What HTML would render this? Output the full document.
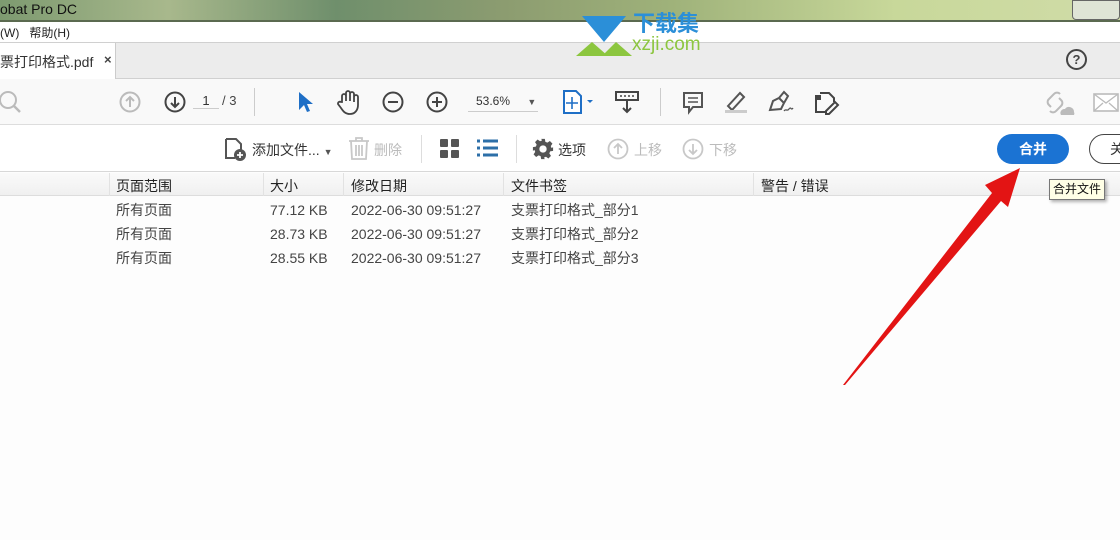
<!DOCTYPE html>
<html><head><meta charset="utf-8"><style>
*{margin:0;padding:0;box-sizing:border-box}
body{width:1120px;height:540px;overflow:hidden;background:#fdfdfd;font-family:"Liberation Sans","Noto Sans CJK SC",sans-serif;color:#333;position:relative;font-size:14px}
.a{position:absolute;white-space:nowrap}
.ic{position:absolute}
</style></head><body>
<div class="a" style="left:0;top:0;width:1120px;height:21px;background:linear-gradient(90deg,#7d9a70 0%,#a8b88c 15%,#6f8f6c 30%,#8c9c70 45%,#9fb27a 60%,#c8d89a 80%,#d0dca8 100%)"></div>
<div class="a" style="left:0;top:1px;font-size:14px;color:#111">obat Pro DC</div>
<div class="a" style="left:1072px;top:0;width:48px;height:20px;background:#dfe4d6;border:1px solid #666;border-radius:0 0 4px 4px"></div>
<div class="a" style="left:0;top:20px;width:1120px;height:2px;background:#5b6a50"></div>
<div class="a" style="left:0;top:22px;width:1120px;height:20px;background:#fff"></div>
<div class="a" style="left:0;top:24px;font-size:12px;color:#222">(W)&nbsp;&nbsp;&nbsp;帮助(H)</div>
<div class="a" style="left:0;top:42px;width:1120px;height:37px;background:#ececec;border-top:1px solid #d0d0d0;border-bottom:1px solid #d0d0d0"></div>
<div class="a" style="left:0;top:43px;width:116px;height:36px;background:#fff;border-right:1px solid #ccc"></div>
<div class="a" style="left:0;top:52px;font-size:14px;color:#333">票打印格式.pdf</div>
<div class="a" style="left:104px;top:52px;font-size:13px;color:#444;font-weight:bold">×</div>
<div class="a" style="left:1066px;top:49px;width:21px;height:21px;border:2px solid #444;border-radius:50%;text-align:center;font-size:13px;line-height:17px;font-weight:bold;color:#444">?</div>
<svg class="ic" style="left:574px;top:14px" width="60" height="44"><polygon points="8,2 52,2 30,28" fill="#2b8fd8"/><polygon points="2,42 18,28 34,42" fill="#8cc63f"/><polygon points="28,42 42,28 58,42" fill="#8cc63f"/></svg>
<div class="a" style="left:633px;top:12px;font-size:22px;font-weight:bold;color:#2b8fd8;line-height:24px">下载集</div>
<div class="a" style="left:632px;top:34px;font-size:19px;color:#8cc63f;line-height:22px">xzji.com</div>
<div class="a" style="left:0;top:79px;width:1120px;height:46px;background:#f9f9f9;border-bottom:1px solid #ddd"></div>
<svg class="ic" style="left:0;top:90px" width="24" height="24"><circle cx="8" cy="10" r="8" fill="none" stroke="#bbb" stroke-width="2"/><line x1="14" y1="16" x2="20" y2="22" stroke="#bbb" stroke-width="2.5"/></svg>
<svg class="ic" style="left:119px;top:91px" width="22" height="22"><circle cx="11" cy="11" r="9.5" fill="none" stroke="#bbb" stroke-width="2"/><path d="M11 16V6M7 10l4-4 4 4" fill="none" stroke="#bbb" stroke-width="2"/></svg>
<svg class="ic" style="left:164px;top:91px" width="22" height="22"><circle cx="11" cy="11" r="9.5" fill="none" stroke="#444" stroke-width="2"/><path d="M11 6v10M7 12l4 4 4-4" fill="none" stroke="#444" stroke-width="2"/></svg>
<div class="a" style="left:193px;top:93px;width:26px;text-align:center;font-size:13px;color:#333;border-bottom:1px solid #ccc">1</div>
<div class="a" style="left:222px;top:93px;font-size:13px;color:#444">/ 3</div>
<div class="a" style="left:254px;top:88px;width:1px;height:28px;background:#ccc"></div>
<svg class="ic" style="left:296px;top:90px" width="20" height="24"><path d="M3 2L3 20 8 15 11 22 14 21 11 14 17 14Z" fill="#1f6fc6"/></svg>
<svg class="ic" style="left:336px;top:88px" width="26" height="28"><path d="M6 14V8a2 2 0 014 0v5V5a2 2 0 014 0v8V6a2 2 0 014 0v8V9a2 2 0 014 0v8c0 5-3 9-8 9s-7-3-9-6l-3-4a2 2 0 013-2z" fill="none" stroke="#444" stroke-width="1.8"/></svg>
<svg class="ic" style="left:382px;top:91px" width="22" height="22"><circle cx="11" cy="11" r="9.5" fill="none" stroke="#444" stroke-width="2"/><line x1="6" y1="11" x2="16" y2="11" stroke="#444" stroke-width="2"/></svg>
<svg class="ic" style="left:426px;top:91px" width="22" height="22"><circle cx="11" cy="11" r="9.5" fill="none" stroke="#444" stroke-width="2"/><path d="M6 11h10M11 6v10" stroke="#444" stroke-width="2"/></svg>
<div class="a" style="left:468px;top:94px;width:70px;font-size:12px;color:#333;border-bottom:1px solid #ccc;padding:0 0 3px 8px">53.6% <span style="margin-left:14px;font-size:9px;color:#555">▼</span></div>
<svg class="ic" style="left:562px;top:90px" width="34" height="24"><path d="M2 1h12l5 5v17H2z" fill="#fff" stroke="#1f6fc6" stroke-width="2"/><path d="M10 7v12M4 13h12" stroke="#1f6fc6" stroke-width="1.6"/><path d="M25 10l3 3 3-3z" fill="#1f6fc6"/></svg>
<svg class="ic" style="left:614px;top:90px" width="26" height="24"><rect x="2" y="2" width="22" height="8" fill="none" stroke="#444" stroke-width="2"/><path d="M6 6h2M10 6h2M14 6h2M18 6h2" stroke="#444" stroke-width="1.5"/><path d="M13 11v11M9 18l4 4 4-4" fill="none" stroke="#444" stroke-width="2"/></svg>
<div class="a" style="left:660px;top:88px;width:1px;height:28px;background:#ccc"></div>
<svg class="ic" style="left:682px;top:91px" width="22" height="24"><path d="M2 2h18v14h-9l-4 5v-5H2z" fill="none" stroke="#555" stroke-width="2"/><path d="M6 7h10M6 11h10" stroke="#555" stroke-width="1.5"/></svg>
<svg class="ic" style="left:722px;top:90px" width="28" height="24"><path d="M6 16L18 3l4 4L10 20z" fill="none" stroke="#555" stroke-width="2"/><rect x="3" y="20" width="22" height="3" fill="#ccc"/></svg>
<svg class="ic" style="left:766px;top:90px" width="28" height="24"><path d="M4 20l3-9 6-3 5 5-3 6z M13 8l5-6 4 4-4 7" fill="none" stroke="#555" stroke-width="2"/><path d="M18 21c2-3 3 1 5-2s2 2 4-1" fill="none" stroke="#555" stroke-width="1.3"/></svg>
<svg class="ic" style="left:812px;top:89px" width="28" height="26"><path d="M8 4h9l5 5v4M4 10v13h10" fill="none" stroke="#444" stroke-width="2"/><rect x="3" y="6" width="6" height="5" fill="#444"/><path d="M14 22l9-9 3 3-9 9h-3z" fill="none" stroke="#444" stroke-width="2"/></svg>
<svg class="ic" style="left:1046px;top:90px" width="30" height="26"><path d="M5 17l-2-2a4 4 0 010-6l5-5a4 4 0 016 0M13 8l2 2a4 4 0 010 6l-5 5a4 4 0 01-6 0" fill="none" stroke="#bbb" stroke-width="2"/><path d="M15 25a4 4 0 014-6 5 5 0 019 3 3 3 0 010 3z" fill="#bbb"/></svg>
<svg class="ic" style="left:1093px;top:93px" width="27" height="20"><rect x="1" y="1" width="24" height="17" fill="#fff" stroke="#bbb" stroke-width="1.6"/><path d="M1 1l12 9 12-9M1 18l9-8M25 18l-9-8" fill="none" stroke="#bbb" stroke-width="1.3"/></svg>
<div class="a" style="left:0;top:125px;width:1120px;height:47px;background:#fff;border-bottom:1px solid #d8d8d8"></div>
<svg class="ic" style="left:224px;top:137px" width="24" height="26"><path d="M2 2h10l5 5v6M2 2v19h9" fill="none" stroke="#555" stroke-width="2"/><circle cx="16" cy="18" r="6" fill="#555"/><path d="M16 15v6M13 18h6" stroke="#fff" stroke-width="1.8"/></svg>
<div class="a" style="left:252px;top:140px;font-size:14px;color:#333">添加文件... <span style="font-size:9px;color:#555">▼</span></div>
<svg class="ic" style="left:348px;top:137px" width="22" height="24"><path d="M1 4h20M8 4V1h6v3M3 4l1 18h14l1-18M8 8v11M11 8v11M14 8v11" fill="none" stroke="#c8c8c8" stroke-width="1.8"/></svg>
<div class="a" style="left:374px;top:140px;font-size:14px;color:#bbb">删除</div>
<div class="a" style="left:421px;top:135px;width:1px;height:28px;background:#ddd"></div>
<svg class="ic" style="left:440px;top:139px" width="20" height="20"><rect x="0" y="0" width="8" height="8" rx="1" fill="#555"/><rect x="11" y="0" width="8" height="8" rx="1" fill="#555"/><rect x="0" y="11" width="8" height="8" rx="1" fill="#555"/><rect x="11" y="11" width="8" height="8" rx="1" fill="#555"/></svg>
<svg class="ic" style="left:477px;top:139px" width="22" height="20"><path d="M0 2h3M6 2h15M0 9h3M6 9h15M0 16h3M6 16h15" stroke="#2d6fa8" stroke-width="3"/></svg>
<div class="a" style="left:516px;top:135px;width:1px;height:28px;background:#ddd"></div>
<svg class="ic" style="left:532px;top:138px" width="22" height="22" viewBox="0 0 24 24"><path fill="#555" d="M10 1h4l.6 3.2 2.2.9 2.7-1.8 2.8 2.8-1.8 2.7.9 2.2L23 10v4l-3.2.6-.9 2.2 1.8 2.7-2.8 2.8-2.7-1.8-2.2.9L14 23h-4l-.6-3.2-2.2-.9-2.7 1.8-2.8-2.8 1.8-2.7-.9-2.2L1 14v-4l3.2-.6.9-2.2-1.8-2.7 2.8-2.8 2.7 1.8 2.2-.9zM12 8a4 4 0 100 8 4 4 0 000-8z"/></svg>
<div class="a" style="left:558px;top:140px;font-size:14px;color:#333">选项</div>
<svg class="ic" style="left:607px;top:138px" width="22" height="22"><circle cx="11" cy="11" r="9.5" fill="none" stroke="#c8c8c8" stroke-width="1.8"/><path d="M11 16V6M7 10l4-4 4 4" fill="none" stroke="#c8c8c8" stroke-width="1.8"/></svg>
<div class="a" style="left:634px;top:140px;font-size:14px;color:#bbb">上移</div>
<svg class="ic" style="left:682px;top:138px" width="22" height="22"><circle cx="11" cy="11" r="9.5" fill="none" stroke="#c8c8c8" stroke-width="1.8"/><path d="M11 6v10M7 12l4 4 4-4" fill="none" stroke="#c8c8c8" stroke-width="1.8"/></svg>
<div class="a" style="left:709px;top:140px;font-size:14px;color:#bbb">下移</div>
<div class="a" style="left:997px;top:134px;width:72px;height:30px;background:#1b73d3;border-radius:15px;color:#fff;text-align:center;line-height:30px;font-size:14px;font-weight:bold">合并</div>
<div class="a" style="left:1089px;top:134px;width:60px;height:30px;border:1px solid #444;border-radius:15px;line-height:28px;padding-left:20px;font-size:14px;color:#333">关</div>
<div class="a" style="left:0;top:173px;width:1120px;height:23px;background:linear-gradient(#fafafa,#f0f0f0);border-bottom:1px solid #ddd"></div>
<div class="a" style="left:109px;top:173px;width:1px;height:23px;background:#e2e2e2"></div>
<div class="a" style="left:263px;top:173px;width:1px;height:23px;background:#e2e2e2"></div>
<div class="a" style="left:343px;top:173px;width:1px;height:23px;background:#e2e2e2"></div>
<div class="a" style="left:503px;top:173px;width:1px;height:23px;background:#e2e2e2"></div>
<div class="a" style="left:753px;top:173px;width:1px;height:23px;background:#e2e2e2"></div>
<div class="a" style="left:116px;top:176px;font-size:14px;color:#222">页面范围</div>
<div class="a" style="left:270px;top:176px;font-size:14px;color:#222">大小</div>
<div class="a" style="left:351px;top:176px;font-size:14px;color:#222">修改日期</div>
<div class="a" style="left:511px;top:176px;font-size:14px;color:#222">文件书签</div>
<div class="a" style="left:761px;top:176px;font-size:14px;color:#222">警告 / 错误</div>
<div class="a" style="left:116px;top:198px;font-size:14px;color:#444;line-height:24px">所有页面<br>所有页面<br>所有页面</div>
<div class="a" style="left:270px;top:198px;font-size:14px;color:#444;line-height:24px">77.12 KB<br>28.73 KB<br>28.55 KB</div>
<div class="a" style="left:351px;top:198px;font-size:14px;color:#444;line-height:24px">2022-06-30 09:51:27<br>2022-06-30 09:51:27<br>2022-06-30 09:51:27</div>
<div class="a" style="left:511px;top:198px;font-size:14px;color:#444;line-height:24px">支票打印格式_部分1<br>支票打印格式_部分2<br>支票打印格式_部分3</div>
<div class="a" style="left:1049px;top:179px;padding:0 3px;height:21px;line-height:19px;background:#ffffe6;border:1px solid #777;font-size:12px;color:#111;box-shadow:2px 2px 3px rgba(0,0,0,.3)">合并文件</div>
<svg class="ic" style="left:0;top:0" width="1120" height="540"><polygon points="843,385 992,193 985,185 1020,168 1008,207 1001,201 845,385" fill="#e31414"/></svg>
</body></html>
